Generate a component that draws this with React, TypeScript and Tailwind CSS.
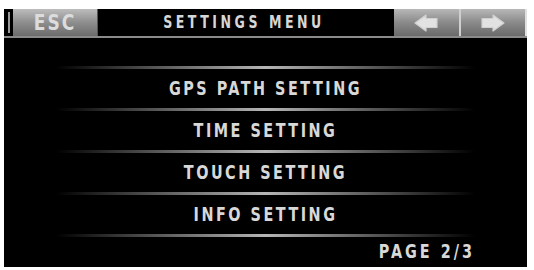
import React from 'react';

const items = ['GPS PATH SETTING', 'TIME SETTING', 'TOUCH SETTING', 'INFO SETTING'];

function Line() {
  return (
    <div className="h-[3px] bg-gradient-to-r from-transparent via-[#b5b5b5] to-transparent" />
  );
}

function Arrow({ dir }: { dir: 'left' | 'right' }) {
  return (
    <svg width="28" height="18" viewBox="0 0 28 18" className={dir === 'right' ? '' : 'scale-x-[-1]'}>
      <path d="M3 4.5 H14 V1 L25 9 L14 17 V13.5 H3 Z" fill="#e2e2e2" stroke="#d0d0d0" strokeWidth="1.2" strokeLinejoin="round" />
    </svg>
  );
}

export default function App() {
  return (
    <div
      className="w-[534px] h-[270px] bg-white pl-[4px] pt-[9px] pr-[7px] pb-[3px]"
      style={{ fontFamily: '"DejaVu Sans Condensed", "DejaVu Sans", "Liberation Sans", sans-serif' }}
    >
      <div className="h-full bg-black flex flex-col">
        <header className="h-[29px] flex items-stretch border-b-2 border-[#8a8a8a]">
          <div className="w-[9px] flex justify-center">
            <div className="w-[2px] mt-[3px] mb-[3px] bg-[#9a9a9a]" />
          </div>
          <div className="w-[85px] bg-gradient-to-b from-[#bdbdbd] via-[#8e8e8e] to-[#6c6c6c] flex items-center justify-center border-r border-[#555]">
            <span className="text-[19px] font-bold tracking-[2px] text-[#dcdcdc] scale-y-[1.1]">ESC</span>
          </div>
          <div className="flex-1 flex items-center justify-center pr-[4px]">
            <span className="text-[14px] font-bold tracking-[3.5px] text-[#d6d6d6] scale-y-[1.25]">SETTINGS MENU</span>
          </div>
          <div className="w-[131px] flex bg-gradient-to-b from-[#b8b8b8] via-[#8a8a8a] to-[#6a6a6a]">
            <div className="flex-1 flex items-center justify-center border-r-2 border-[#cfcfcf]">
              <Arrow dir="left" />
            </div>
            <div className="flex-1 flex items-center justify-center">
              <Arrow dir="right" />
            </div>
          </div>
          <div className="w-[2px] bg-[#e0e0e0]" />
        </header>

        <div className="flex-1 flex flex-col px-[52px] pt-[28px]">
          <Line />
          {items.map((label) => (
            <React.Fragment key={label}>
              <div className="h-[39px] flex items-center justify-center">
                <span className="text-[16px] font-bold tracking-[2.5px] text-[#d8d8d8] scale-y-[1.2]">{label}</span>
              </div>
              <Line />
            </React.Fragment>
          ))}
          <div className="flex-1 flex items-center justify-end">
            <span className="text-[16px] font-bold tracking-[3px] text-[#d8d8d8] scale-y-[1.2]">PAGE 2/3</span>
          </div>
        </div>
      </div>
    </div>
  );
}
